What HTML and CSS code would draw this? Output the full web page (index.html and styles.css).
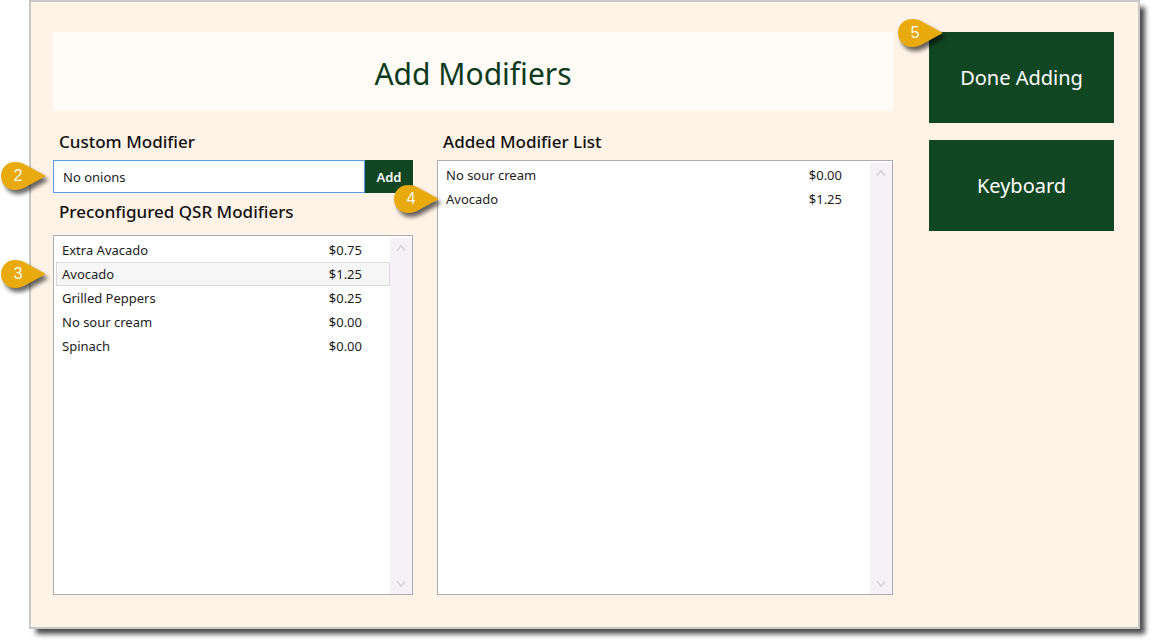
FILE: index.html
```html
<!DOCTYPE html>
<html lang="en">
<head>
    <meta charset="UTF-8">
    <meta name="viewport" content="width=device-width, initial-scale=1.0">
    <title>Add Modifiers</title>
    <link rel="stylesheet" href="styles.css">
</head>
<body>
    <svg class="defs" width="0" height="0" aria-hidden="true">
        <symbol id="pin" viewBox="0 0 44 28">
            <path d="M14 0C6 0 0 6 0 14s6 14 14 14c5 0 9-1.600 13-4.200L44 14.500c.6-.3.6-.7 0-1L27 4.200C23 1.600 19 0 14 0z" fill="#e8aa0c"/>
        </symbol>
        <symbol id="arrow-up" viewBox="0 0 10 8">
            <path d="M1 6.500L5 2l4 4.500" fill="none" stroke="#d3d0d4" stroke-width="1.500"/>
        </symbol>
        <symbol id="arrow-down" viewBox="0 0 10 8">
            <path d="M1 1.500L5 6l4-4.500" fill="none" stroke="#d3d0d4" stroke-width="1.500"/>
        </symbol>
    </svg>
    <div class="window">
        <main class="content">
            <h1 class="title">Add Modifiers</h1>
            <div class="columns">
                <section class="column">
                    <label class="heading" for="custom-modifier">Custom Modifier</label>
                    <form class="custom-form">
                        <input type="text" id="custom-modifier" name="custom-modifier" value="No onions">
                        <button type="button" class="add-btn">Add</button>
                        <span class="marker"><svg><use href="#pin"/></svg><span class="number">2</span></span>
                    </form>
                    <h2 class="heading list-heading" id="preconfigured">Preconfigured QSR Modifiers</h2>
                    <div class="list">
                        <table aria-labelledby="preconfigured">
                            <tbody>
                                <tr><td>Extra Avacado</td><td class="price">$0.75</td></tr>
                                <tr class="selected"><td>Avocado<span class="marker"><svg><use href="#pin"/></svg><span class="number">3</span></span></td><td class="price">$1.25</td></tr>
                                <tr><td>Grilled Peppers</td><td class="price">$0.25</td></tr>
                                <tr><td>No sour cream</td><td class="price">$0.00</td></tr>
                                <tr><td>Spinach</td><td class="price">$0.00</td></tr>
                            </tbody>
                        </table>
                        <div class="scrollbar">
                            <svg><use href="#arrow-up"/></svg>
                            <svg><use href="#arrow-down"/></svg>
                        </div>
                    </div>
                </section>
                <section class="column">
                    <h2 class="heading" id="added">Added Modifier List</h2>
                    <div class="list">
                        <table aria-labelledby="added">
                            <tbody>
                                <tr><td>No sour cream</td><td class="price">$0.00</td></tr>
                                <tr><td>Avocado<span class="marker near"><svg><use href="#pin"/></svg><span class="number">4</span></span></td><td class="price">$1.25</td></tr>
                            </tbody>
                        </table>
                        <div class="scrollbar">
                            <svg><use href="#arrow-up"/></svg>
                            <svg><use href="#arrow-down"/></svg>
                        </div>
                    </div>
                </section>
            </div>
        </main>
        <aside class="actions">
            <button type="button">Done Adding</button>
            <button type="button">Keyboard</button>
            <span class="marker corner"><svg><use href="#pin"/></svg><span class="number">5</span></span>
        </aside>
    </div>
</body>
</html>
```
FILE: styles.css
```css
* {
    box-sizing: border-box;
}
body {
    margin: 0;
    min-height: 100vh;
    display: flex;
    background-color: #fff;
    color: #1c1c1c;
    font-family: "Noto Sans", "Open Sans", sans-serif;
    font-size: 13px;
}
.defs {
    position: absolute;
}
.window {
    flex: 1;
    display: flex;
    gap: 36px;
    margin: 0 15px 15px 29px;
    padding: 30px 24px 32px 22px;
    background-color: #fff2e6;
    border: 2px solid #c8c8c8;
    box-shadow: 6px 6px 5px -1px rgba(0, 0, 0, 0.7);
}
.content {
    flex: 1;
    display: flex;
    flex-direction: column;
}
.title {
    margin: 0;
    padding: 20px 0 16px;
    background-color: #fffcf7;
    color: #0c3a1b;
    font-size: 30px;
    font-weight: 400;
    line-height: 43px;
    text-align: center;
}
.columns {
    flex: 1;
    display: grid;
    grid-template-columns: 15fr 19fr;
    gap: 24px;
    padding-top: 17px;
}
.column {
    display: flex;
    flex-direction: column;
}
.heading {
    margin: 0;
    padding: 0 6px 4px;
    font-size: 17px;
    font-weight: 500;
    line-height: 28px;
    color: #111;
}
.list-heading {
    padding: 5px 6px 9px;
}
.custom-form {
    position: relative;
    display: flex;
}
.custom-form input {
    flex: 1;
    min-width: 0;
    height: 33px;
    padding: 1px 9px 0;
    border: 1px solid #569de5;
    background-color: #fff;
    color: #1c1c1c;
    font: inherit;
}
.add-btn {
    width: 48px;
    padding: 0;
    border: none;
    background-color: #114622;
    color: #fff;
    font: inherit;
    font-weight: 600;
}
.list {
    flex: 1;
    display: flex;
    align-items: flex-start;
    padding: 2px 0 0 2px;
    border: 1px solid #abadb3;
    background-color: #fff;
}
.list table {
    flex: 1;
    border-collapse: separate;
    border-spacing: 0;
}
.list td {
    position: relative;
    height: 24px;
    padding: 0 5px;
    border: 1px solid transparent;
    border-right: none;
    line-height: 20px;
}
.list .price {
    padding-right: 27px;
    border-left: none;
    border-right: 1px solid transparent;
    text-align: right;
}
.list .selected td {
    border-color: #dadada;
    background-color: #f6f6f6;
}
.scrollbar {
    align-self: stretch;
    width: 22px;
    display: flex;
    flex-direction: column;
    justify-content: space-between;
    align-items: center;
    padding: 6px 0;
    background-color: #f5f1f6;
}
.scrollbar svg {
    width: 10px;
    height: 8px;
}
.actions {
    position: relative;
    width: 185px;
    display: flex;
    flex-direction: column;
    gap: 17px;
}
.actions button {
    height: 91px;
    border: none;
    background-color: #114622;
    color: #fff;
    font: inherit;
    font-size: 20px;
}
/* numbered callouts, tip points at the control */
.marker {
    position: absolute;
    top: 50%;
    left: -52px;
    width: 44px;
    height: 28px;
    margin-top: -15px;
    color: #fff;
    font-family: "Liberation Sans", Arial, sans-serif;
    font-size: 16px;
    line-height: 28px;
    filter: drop-shadow(3px 4px 2px rgba(0, 0, 0, 0.6));
    z-index: 1;
}
.marker svg {
    display: block;
    width: 44px;
    height: 28px;
}
.marker .number {
    position: absolute;
    top: 0;
    left: 0;
    width: 34px;
    text-align: center;
}
.list .marker {
    left: -56px;
    margin-top: -14px;
}
.list .near {
    left: -47px;
}
.marker.corner {
    top: 2px;
    left: -31px;
}
```
